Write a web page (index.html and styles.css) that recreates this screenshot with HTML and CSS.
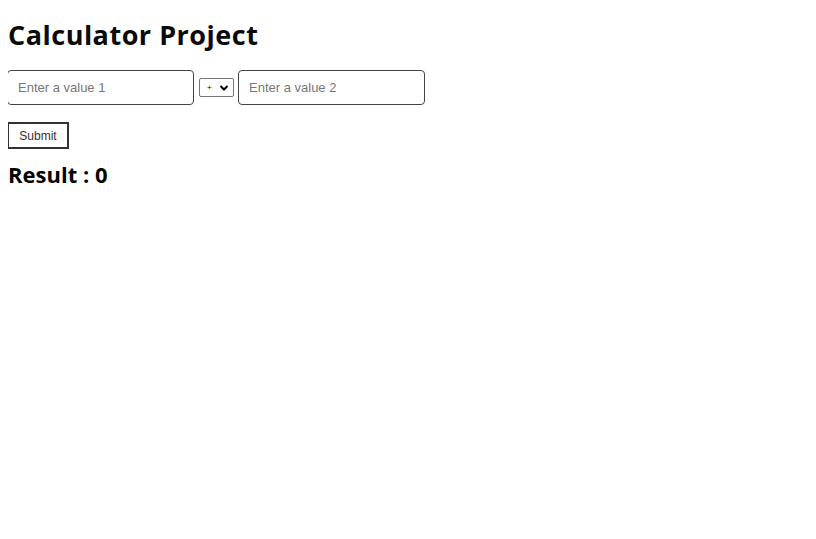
FILE: index.html
```html
<!DOCTYPE html>
<html>
<head>
<meta charset="utf-8">
<title>Calculator Project</title>
<link rel="stylesheet" href="styles.css">
</head>
<body>
<h1 class="title">Calculator Project</h1>
<div class="row">
  <input class="field" type="text" placeholder="Enter a value 1">
  <select class="op"><option>+</option></select>
  <input class="field field-second" type="text" placeholder="Enter a value 2">
</div>
<button class="submit">Submit</button>
<h3 class="result">Result : 0</h3>
</body>
</html>
```
FILE: styles.css
```css
body {
  margin: 8px;
  font-family: "Open Sans", sans-serif;
  color: #000;
  background: #fff;
}
.title {
  font-size: 27px;
  font-weight: 700;
  letter-spacing: 0.5px;
  margin: 10px 0 18px;
  line-height: 34px;
  color: #0a0a0a;
}
.row {
  display: flex;
  align-items: center;
  gap: 5px;
  margin-left: -1px;
}
.field-second {
  margin-left: -1px;
}
.field {
  box-sizing: border-box;
  width: 187px;
  height: 35px;
  border: 1.5px solid #444;
  border-radius: 4px;
  padding: 0 10px;
  font-family: "Liberation Sans", Arial, sans-serif;
  font-size: 13px;
}
.field::placeholder { color: #777; }
.op {
  -webkit-appearance: none;
  appearance: none;
  box-sizing: border-box;
  width: 35px;
  height: 19px;
  font-size: 8px;
  font-family: "Liberation Sans", Arial, sans-serif;
  color: #000;
  background-color: #fff;
  background-image: url("data:image/svg+xml;utf8,<svg xmlns='http://www.w3.org/2000/svg' width='10' height='8' viewBox='0 0 10 8'><path d='M1.5 2 L5 5.5 L8.5 2' fill='none' stroke='black' stroke-width='2'/></svg>");
  background-repeat: no-repeat;
  background-position: right 4px center;
  border: 1px solid #767676;
  border-radius: 2px;
  padding: 0 0 0 7px;
}
.submit {
  display: block;
  box-sizing: border-box;
  margin: 17px 0 0 -1px;
  width: 62px;
  height: 27px;
  background: #fff;
  border: 2px solid #333;
  border-radius: 0;
  font-family: "Liberation Sans", Arial, sans-serif;
  font-size: 12px;
  color: #333;
}
.result {
  font-size: 22px;
  font-weight: 700;
  margin: 10px 0 0;
  line-height: 30px;
}
```
